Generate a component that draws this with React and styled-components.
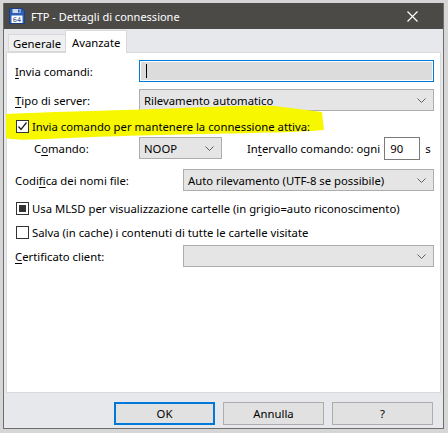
import React from "react";
import styled, { createGlobalStyle } from "styled-components";

const Global = createGlobalStyle`
  html, body { margin: 0; padding: 0; }
  body {
    width: 448px; height: 433px; overflow: hidden;
    background: #d6d6d6;
    font-family: "Noto Sans", "Open Sans", sans-serif;
    font-size: 11.3px; color: #000;
  }
`;

const Screen = styled.div`
  width: 448px; height: 433px; box-sizing: border-box;
  padding: 3px 4px 4px 3px;
  display: flex;
`;

const Dialog = styled.div`
  flex: 1; display: flex; flex-direction: column;
  background: #e6e8ec;
  border: 1px solid #6d6d6d;
  border-top: none;
`;

const TitleBar = styled.div`
  height: 26px; background: #4b4a47; color: #fff;
  display: flex; align-items: center; padding: 0 0 0 5px;
  font-size: 11px;
`;

const TitleText = styled.span`
  margin-left: 6px; flex: 1;
`;

const CloseBtn = styled.div`
  width: 46px; height: 26px; display: flex; align-items: center; justify-content: center;
  margin-right: 8px;
`;

const Tabs = styled.div`
  display: flex; align-items: flex-end; height: 23px; padding-left: 4px;
  position: relative; z-index: 1;
`;

const Tab = styled.div`
  box-sizing: border-box;
  height: ${p => (p.$active ? 23 : 18)}px;
  padding: 0 ${p => (p.$active ? 6 : 4)}px;
  margin-bottom: ${p => (p.$active ? -1 : 0)}px;
  background: ${p => (p.$active ? "#fff" : "#f0f0f0")};
  border: 1px solid #d9d9d9;
  border-bottom: ${p => (p.$active ? "none" : "1px solid #d9d9d9")};
  display: flex; align-items: center;
  margin-left: ${p => (p.$active ? -1 : 0)}px;
`;

const Panel = styled.div`
  margin: 0 2px 0 2px;
  height: 339px;
  background: #fff;
  border: 1px solid #d9d9d9;
  padding: 0 6px 0 8px;
  display: flex; flex-direction: column;
  position: relative;
`;

const Row = styled.div`
  display: flex; align-items: center;
  height: ${p => p.$h || 22}px;
  margin-top: ${p => p.$mt || 0}px;
  position: relative;
  white-space: nowrap;
`;

const Label = styled.span`
  width: ${p => p.$w}px; flex-shrink: 0;
  padding-left: ${p => p.$indent || 0}px; box-sizing: border-box;
`;

const Accel = styled.span`
  text-decoration: underline;
  text-underline-offset: 2px;
`;

const TextInput = styled.div`
  flex: 1; height: 22px; box-sizing: border-box;
  border: 1px solid #0078d7; background: #fff; padding: 1px;
  display: flex;
`;

const InputFill = styled.div`
  flex: 1; background: #dcdcdc; display: flex; align-items: center; padding-left: 5px;
`;

const Caret = styled.div`
  width: 1px; height: 14px; background: #000;
`;

const Select = styled.div`
  box-sizing: border-box; height: 22px;
  width: ${p => (p.$w ? `${p.$w}px` : "auto")};
  flex: ${p => (p.$w ? "none" : 1)};
  background: #e5e5e5; border: 1px solid #adadad;
  display: flex; align-items: center; padding: 0 7px 0 4px;
`;

const SelectText = styled.span`
  flex: 1; white-space: nowrap;
`;

const SmallInput = styled.div`
  box-sizing: border-box; width: 36px; height: 23px; flex-shrink: 0;
  border: 1px solid #7a7a7a; background: #fff;
  display: flex; align-items: center; padding-left: 5px;
  margin: 0 5px 0 4px;
`;

const Spacer = styled.div`
  width: ${p => p.$w}px; flex-shrink: 0;
`;

const CheckRow = styled.label`
  display: flex; align-items: center; gap: 3px;
  height: 20px; margin-top: ${p => p.$mt || 0}px;
  position: relative; white-space: nowrap;
`;

const Box = styled.span`
  width: 13px; height: 13px; box-sizing: border-box;
  border: 1px solid #333; background: #fff; flex-shrink: 0;
  display: flex; align-items: center; justify-content: center;
  margin-left: 1px; position: relative;
`;

const Indeterminate = styled.span`
  width: 7px; height: 7px; background: #333;
`;

const Highlight = styled.svg`
  position: absolute; left: -9px; top: -12px;
  pointer-events: none;
`;

const CheckText = styled.span`
  position: relative;
`;

const ButtonBar = styled.div`
  display: flex; justify-content: flex-end; gap: 8px;
  padding: 9px 10px 0 0;
`;

const Button = styled.div`
  box-sizing: border-box; width: 101px; height: 23px;
  background: #e1e1e1;
  border: ${p => (p.$default ? "2px solid #0078d7" : "1px solid #adadad")};
  display: flex; align-items: center; justify-content: center;
`;

const Chevron = () => (
  <svg width="9" height="5" viewBox="0 0 9 5">
    <polyline points="0.5,0.5 4.5,4.5 8.5,0.5" fill="none" stroke="#606060" strokeWidth="1" />
  </svg>
);

const Check = () => (
  <svg width="11" height="11" viewBox="0 0 11 11">
    <polyline points="1.5,5.5 4,8.5 9.5,1.5" fill="none" stroke="#222" strokeWidth="1.3" />
  </svg>
);

const FloppyIcon = () => (
  <svg width="16" height="16" viewBox="0 0 16 16">
    <path d="M0.5 0.5 H13 L15.5 3 V15.5 H0.5 Z" fill="#2b5eb8" stroke="#1c3f85" />
    <rect x="3.5" y="1" width="8" height="4" fill="#cfd8e8" />
    <rect x="9" y="1.5" width="1.6" height="3" fill="#2b5eb8" />
    <rect x="2.5" y="7.5" width="11" height="7.5" fill="#fff" />
    <text x="8" y="14.2" fontSize="6.5" fontFamily="DejaVu Sans" textAnchor="middle" fill="#1c3f85">64</text>
  </svg>
);

export default function App() {
  return (
    <>
      <Global />
      <Screen>
        <Dialog>
          <TitleBar>
            <FloppyIcon />
            <TitleText>FTP - Dettagli di connessione</TitleText>
            <CloseBtn>
              <svg width="11" height="11" viewBox="0 0 11 11">
                <path d="M0.5 0.5 L10.5 10.5 M10.5 0.5 L0.5 10.5" stroke="#fff" strokeWidth="1.2" />
              </svg>
            </CloseBtn>
          </TitleBar>
          <Tabs>
            <Tab>Generale</Tab>
            <Tab $active>Avanzate</Tab>
          </Tabs>
          <Panel>
            <Row $mt={7}>
              <Label $w={124}><Accel>I</Accel>nvia comandi:</Label>
              <TextInput>
                <InputFill><Caret /></InputFill>
              </TextInput>
            </Row>
            <Row $mt={7}>
              <Label $w={124}><Accel>T</Accel>ipo di server:</Label>
              <Select>
                <SelectText>Rilevamento automatico</SelectText>
                <Chevron />
              </Select>
            </Row>
            <CheckRow $mt={5}>
              <Highlight width="330" height="38" viewBox="0 0 330 38">
                <path
                  d="M0 10 C40 8 90 7 150 5 C200 3 240 1 268 2 C285 4 300 6 316 8 L318 26 C300 28 250 29 200 30 C140 31 80 33 40 35 C20 36 6 36 0 34 Z"
                  fill="#f7f700"
                />
              </Highlight>
              <Box><Check /></Box>
              <CheckText>Invia comando per mantenere la connessione attiva:</CheckText>
            </CheckRow>
            <Row $mt={1}>
              <Label $w={124} $indent={19}>C<Accel>o</Accel>mando:</Label>
              <Select $w={83}>
                <SelectText>NOOP</SelectText>
                <Chevron />
              </Select>
              <Spacer $w={25} />
              <span>In<Accel>t</Accel>ervallo comando: ogni</span>
              <SmallInput>90</SmallInput>
              <span>s</span>
            </Row>
            <Row $mt={10}>
              <Label $w={168}>Codi<Accel>f</Accel>ica dei nomi file:</Label>
              <Select>
                <SelectText>Auto rilevamento (UTF-8 se possibile)</SelectText>
                <Chevron />
              </Select>
            </Row>
            <CheckRow $mt={7}>
              <Box><Indeterminate /></Box>
              <span>Usa MLSD per visualizzazione cartelle (in grigio=auto riconoscimento)</span>
            </CheckRow>
            <CheckRow $mt={4}>
              <Box />
              <span>Salva (in cache) i contenuti di tutte le cartelle visitate</span>
            </CheckRow>
            <Row $mt={3}>
              <Label $w={168}><Accel>C</Accel>ertificato client:</Label>
              <Select>
                <SelectText></SelectText>
                <Chevron />
              </Select>
            </Row>
          </Panel>
          <ButtonBar>
            <Button $default>OK</Button>
            <Button>Annulla</Button>
            <Button>?</Button>
          </ButtonBar>
        </Dialog>
      </Screen>
    </>
  );
}
